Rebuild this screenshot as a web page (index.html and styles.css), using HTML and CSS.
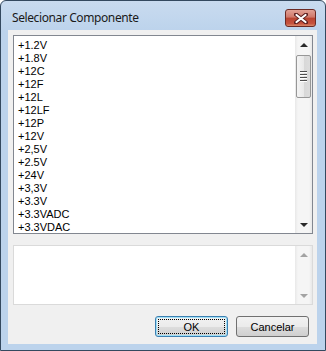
FILE: index.html
```html
<!DOCTYPE html>
<html lang="pt">
    <head>
        <meta charset="UTF-8">
        <title>Selecionar Componente</title>
        <link rel="stylesheet" href="styles.css">
    </head>
    <body>
        <div class="window">
            <div class="titlebar">
                <span class="title">Selecionar Componente</span>
                <div class="close">
                    <svg width="14" height="11" viewBox="0 0 14 11">
                        <path d="M2 1.5 L12 9.5 M12 1.5 L2 9.5" stroke="#5a1f1f" stroke-width="4" stroke-linecap="round"/>
                        <path d="M2.5 2 L11.5 9 M11.5 2 L2.5 9" stroke="#ffffff" stroke-width="2.2" stroke-linecap="round"/>
                    </svg>
                </div>
            </div>
            <div class="client">
                <div class="listbox">
                    <ul class="items">
                        <li>+1.2V</li>
                        <li>+1.8V</li>
                        <li>+12C</li>
                        <li>+12F</li>
                        <li>+12L</li>
                        <li>+12LF</li>
                        <li>+12P</li>
                        <li>+12V</li>
                        <li>+2,5V</li>
                        <li>+2.5V</li>
                        <li>+24V</li>
                        <li>+3,3V</li>
                        <li>+3.3V</li>
                        <li>+3.3VADC</li>
                        <li>+3.3VDAC</li>
                    </ul>
                    <div class="scrollbar">
                        <div class="arrow"><span class="tri up"></span></div>
                        <div class="track">
                            <div class="thumb">
                                <div class="grip"></div>
                                <div class="grip"></div>
                                <div class="grip"></div>
                                <div class="grip"></div>
                            </div>
                        </div>
                        <div class="arrow"><span class="tri down"></span></div>
                    </div>
                </div>
                <div class="memo">
                    <div class="memo-text"></div>
                    <div class="scrollbar disabled">
                        <div class="arrow"><span class="tri up"></span></div>
                        <div class="track"></div>
                        <div class="arrow"><span class="tri down"></span></div>
                    </div>
                </div>
                <div class="buttons">
                    <button class="btn default"><span class="focus">OK</span></button>
                    <button class="btn">Cancelar</button>
                </div>
            </div>
        </div>
    </body>
</html>
```

FILE: styles.css
```css
html, body {
    margin: 0;
    padding: 0;
    background: #ffffff;
}

.window {
    width: 326px;
    height: 351px;
    box-sizing: border-box;
    border: 1px solid #34495f;
    border-radius: 6px 6px 0 0;
    background: linear-gradient(#c9dbef, #bcd3ec 30px, #bcd3ec);
    padding: 0 8px 6px 7px;
    display: flex;
    flex-direction: column;
}

.titlebar {
    height: 29px;
    display: flex;
    align-items: center;
    justify-content: space-between;
    padding: 0 1px 0 4px;
}

.title {
    font-family: "Noto Sans", sans-serif;
    font-size: 12px;
    letter-spacing: -0.4px;
    color: #1a1a1a;
    margin-top: 3px;
}

.close {
    width: 29px;
    height: 16px;
    margin-top: 5px;
    border: 1px solid #6b2a24;
    border-radius: 3px;
    background: linear-gradient(#e2a195, #d0786a 45%, #b84431 50%, #c7533e 85%, #d98a6b);
    display: flex;
    align-items: center;
    justify-content: center;
}

.client {
    flex: 1;
    background: #f0f0f0;
    padding: 5px 4px 0 5px;
    display: flex;
    flex-direction: column;
}

.listbox {
    height: 199px;
    box-sizing: border-box;
    border: 1px solid #828790;
    background: #ffffff;
    display: flex;
}

.items {
    flex: 1;
    list-style: none;
    margin: 0;
    padding: 3px 0 0 4px;
    font-family: "Liberation Sans", Arial, sans-serif;
    font-size: 11px;
    line-height: 13px;
    color: #000000;
    overflow: hidden;
}

.scrollbar {
    width: 17px;
    display: flex;
    flex-direction: column;
    background: linear-gradient(90deg, #e8e8e8, #f5f5f5 3px, #f5f5f5 14px, #e8e8e8);
}

.arrow {
    height: 17px;
    display: flex;
    align-items: center;
    justify-content: center;
}

.tri {
    width: 0;
    height: 0;
    border-left: 4px solid transparent;
    border-right: 4px solid transparent;
}

.tri.up {
    border-bottom: 4px solid #2a2a2a;
}

.tri.down {
    border-top: 4px solid #2a2a2a;
}

.disabled .tri.up {
    border-bottom-color: #a3a3a3;
}

.disabled .tri.down {
    border-top-color: #a3a3a3;
}

.track {
    flex: 1;
    padding-top: 2px;
}

.thumb {
    width: 13px;
    height: 41px;
    margin-left: 1px;
    border: 1px solid #979797;
    border-radius: 2px;
    background: linear-gradient(90deg, #f4f4f4, #e9e9e9 50%, #d8d8d8 55%, #dcdcdc);
    display: flex;
    flex-direction: column;
    align-items: center;
    justify-content: center;
    gap: 1px;
}

.grip {
    width: 7px;
    height: 1px;
    background: #4f4f4f;
    border-bottom: 1px solid #ffffff;
}

.memo {
    height: 60px;
    margin-top: 11px;
    box-sizing: border-box;
    border: 1px solid #dadada;
    background: #ffffff;
    display: flex;
}

.memo-text {
    flex: 1;
}

.buttons {
    display: flex;
    justify-content: flex-end;
    gap: 8px;
    margin-top: 11px;
    padding-right: 4px;
}

.btn {
    width: 73px;
    height: 21px;
    padding: 0;
    border: 1px solid #707070;
    border-radius: 3px;
    background: linear-gradient(#f2f2f2, #ebebeb 50%, #dddddd 51%, #cfcfcf);
    font-family: "Liberation Sans", Arial, sans-serif;
    font-size: 11px;
    color: #000000;
}

.btn.default {
    border-color: #3c7fb1;
    box-shadow: inset 0 0 0 1px #9fe0f7;
    padding: 2px;
}

.focus {
    display: flex;
    align-items: center;
    justify-content: center;
    height: 100%;
    box-sizing: border-box;
    border: 1px dotted #000000;
}
```
